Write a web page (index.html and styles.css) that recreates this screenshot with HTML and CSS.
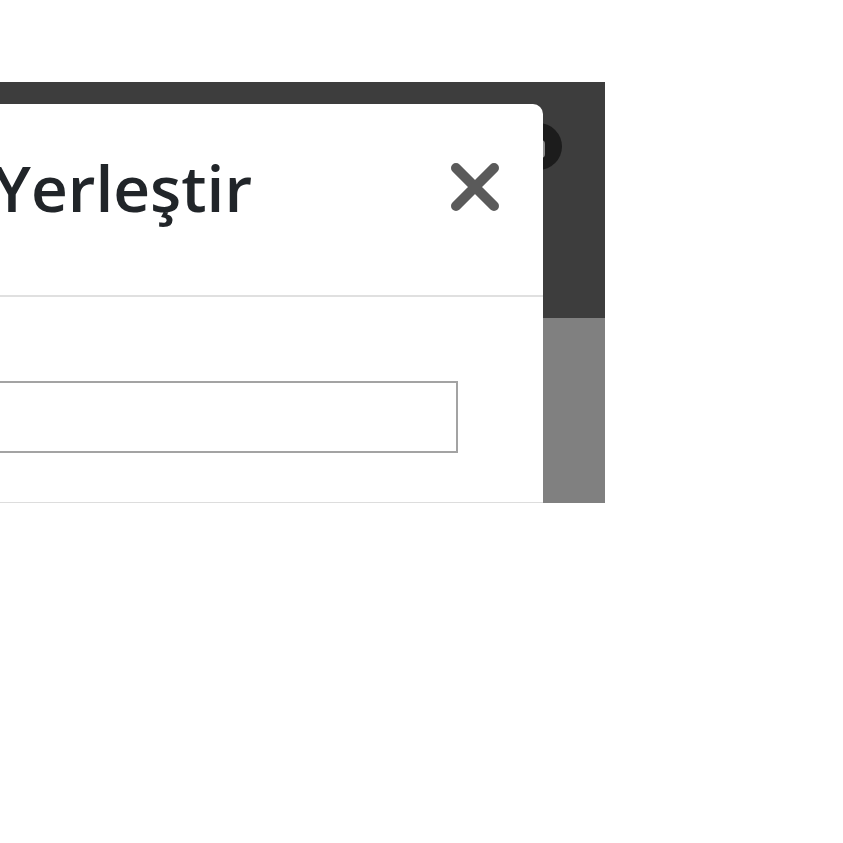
FILE: index.html
```html
<!DOCTYPE html>
<html lang="tr">
<head>
<meta charset="utf-8">
<title>Yerleştir</title>
<link rel="stylesheet" href="styles.css">
</head>
<body>
<div class="page">
  <div class="frame">
    <div class="topbar"></div>
    <div class="backdrop"></div>
    <span class="avatar"><span class="avatar-dot"></span></span>
    <div class="modal">
      <div class="modal-header">
        <h5 class="modal-title">Yerleştir</h5>
        <button class="close" type="button" aria-label="Kapat">
          <svg width="56" height="56" viewBox="0 0 56 56"><path d="M9 9 L47 47 M47 9 L9 47" stroke="#5a5a5a" stroke-width="10" stroke-linecap="round"/></svg>
        </button>
      </div>
      <div class="modal-body">
        <input class="field" type="text">
      </div>
      <div class="modal-footer"></div>
    </div>
  </div>
</div>
</body>
</html>
```
FILE: styles.css
```css
html, body { margin: 0; padding: 0; background: #fff; }
.page { padding-top: 82px; }
.frame {
  position: relative;
  width: 605px;
  height: 421px;
  overflow: hidden;
  display: flex;
  flex-direction: column;
}
.topbar { height: 236px; background: #3d3d3d; }
.backdrop { flex: 1; background: #808080; }
.avatar {
  position: absolute;
  left: 515px; top: 41px;
  width: 47px; height: 47px;
  border-radius: 50%;
  background: #1c1c1c;
}
.avatar-dot {
  position: absolute; left: 22px; top: 17px;
  width: 8px; height: 18px; border-radius: 4px; background: #8a8a8a;
}
.modal {
  position: absolute;
  top: 22px;
  right: 62px;
  width: 760px;
  height: 420px;
  background: #fff;
  border-radius: 10px;
  display: flex;
  flex-direction: column;
}
.modal-header {
  height: 191px;
  border-bottom: 2px solid #e0e0e0;
  display: flex;
  align-items: center;
  justify-content: space-between;
  padding: 0 40px 0 210px;
}
.modal-title {
  margin: -24px 0 0;
  font-family: "Open Sans", "DejaVu Sans", sans-serif;
  font-weight: 600;
  font-size: 64px;
  color: #212529;
}
.close {
  border: 0; background: none; padding: 0; margin-top: -26px;
  width: 56px; height: 56px; display: flex;
}
.modal-body {
  height: 205px;
  padding: 84px 85px 0 0;
  box-sizing: border-box;
}
.field {
  display: block;
  width: 100%;
  height: 72px;
  box-sizing: border-box;
  border: 2px solid #a3a3a3;
  background: #fff;
  margin: 0;
}
.modal-footer { border-top: 2px solid #dddddd; flex: 1; }
```
